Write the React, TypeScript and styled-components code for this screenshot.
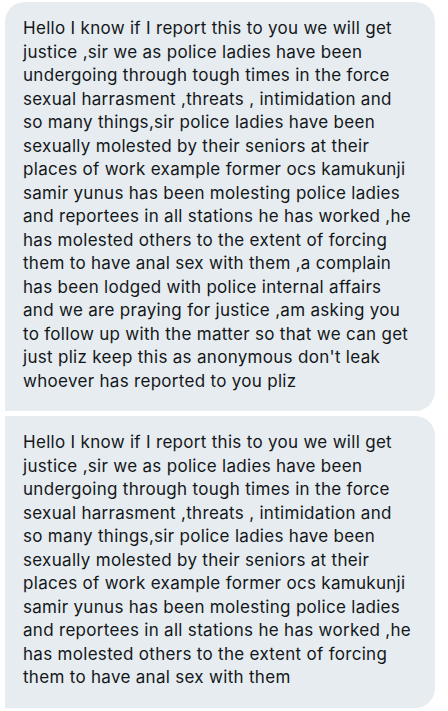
import React from "react";
import styled, { createGlobalStyle } from "styled-components";

const Global = createGlobalStyle`
  html, body { margin: 0; padding: 0; background: #ffffff; }
  body { font-family: Inter, "Liberation Sans", Arial, sans-serif; }
`;

const Thread = styled.div`
  display: flex;
  flex-direction: column;
  gap: 5px;
  padding: 2px 13px 6px 5px;
  width: 448px;
  box-sizing: border-box;
`;

const Bubble = styled.div<{ $first?: boolean }>`
  background: #e6ecf0;
  color: #14171a;
  border-radius: ${(p) => (p.$first ? "20px 20px 20px 0" : "0 20px 20px 0")};
  padding: 15px 8px 18px 18px;
  font-family: Inter, "Liberation Sans", Arial, sans-serif;
  font-size: 17px;
  line-height: 23.5px;
  letter-spacing: 0.3px;
`;

const Line = styled.div`
  white-space: nowrap;
`;

const base = [
  "Hello I know if I report this to you we will get",
  "justice ,sir we as police ladies have been",
  "undergoing through tough times in the force",
  "sexual harrasment ,threats , intimidation and",
  "so many things,sir police ladies have been",
  "sexually molested by their seniors at their",
  "places of work example former ocs kamukunji",
  "samir yunus has been molesting police ladies",
  "and reportees in all stations he has worked ,he",
  "has molested others to the extent of forcing",
];

const first = [
  ...base,
  "them to have anal sex with them ,a complain",
  "has been lodged with police internal affairs",
  "and we are praying for justice ,am asking you",
  "to follow up with the matter so that we can get",
  "just pliz keep this as anonymous don't leak",
  "whoever has reported to you pliz",
];

const second = [...base, "them to have anal sex with them"];

export default function App() {
  return (
    <>
      <Global />
      <Thread>
        <Bubble $first>
          {first.map((l, i) => (
            <Line key={i}>{l}</Line>
          ))}
        </Bubble>
        <Bubble>
          {second.map((l, i) => (
            <Line key={i}>{l}</Line>
          ))}
        </Bubble>
      </Thread>
    </>
  );
}
